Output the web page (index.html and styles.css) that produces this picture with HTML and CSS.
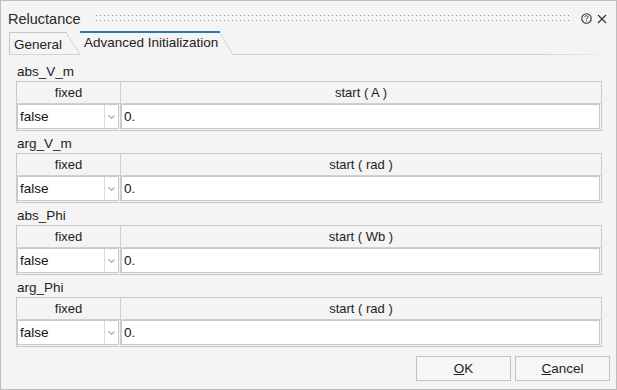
FILE: index.html
```html
<!DOCTYPE html>
<html lang="en">

<head>
    <meta charset="UTF-8">
    <meta name="viewport" content="width=device-width, initial-scale=1.0">
    <title>Reluctance</title>
    <link rel="stylesheet" href="styles.css">
</head>

<body>
    <div class="dialog">
        <div class="titlebar">
            <span class="title">Reluctance</span>
            <span class="grip"></span>
            <svg class="help" width="11" height="11" viewBox="0 0 11 11">
                <circle cx="5.5" cy="5.5" r="4.7" fill="none" stroke="#333" stroke-width="1.1" />
                <path d="M3.9 4.3 C3.9 3.2 4.6 2.7 5.5 2.7 C6.4 2.7 7.1 3.2 7.1 4.1 C7.1 5 5.6 5.2 5.6 6.4" fill="none" stroke="#333" stroke-width="1" />
                <rect x="5.1" y="7.3" width="1" height="1" fill="#333" />
            </svg>
            <svg class="close" width="10" height="10" viewBox="0 0 10 10">
                <path d="M1 1 L9 9 M9 1 L1 9" stroke="#333" stroke-width="1.2" />
            </svg>
        </div>

        <div class="tabs">
            <div class="tab">General</div>
            <div class="tab active">Advanced Initialization</div>
        </div>

        <div class="panel">
            <section class="param">
                <div class="param-name">abs_V_m</div>
                <div class="grid">
                    <div class="grid-head">
                        <div class="head-cell">fixed</div>
                        <div class="head-cell">start ( A )</div>
                    </div>
                    <div class="grid-row">
                        <div class="cell-fixed">
                            <div class="combo">
                                <span class="combo-value">false</span>
                                <span class="combo-arrow"><svg width="7" height="4" viewBox="0 0 7 4"><path d="M0.5 0.5 L3.5 3.3 L6.5 0.5" fill="none" stroke="#a3a3a3" stroke-width="1.1" /></svg></span>
                            </div>
                        </div>
                        <div class="cell-start">
                            <div class="field">0.</div>
                        </div>
                    </div>
                </div>
            </section>

            <section class="param">
                <div class="param-name">arg_V_m</div>
                <div class="grid">
                    <div class="grid-head">
                        <div class="head-cell">fixed</div>
                        <div class="head-cell">start ( rad )</div>
                    </div>
                    <div class="grid-row">
                        <div class="cell-fixed">
                            <div class="combo">
                                <span class="combo-value">false</span>
                                <span class="combo-arrow"><svg width="7" height="4" viewBox="0 0 7 4"><path d="M0.5 0.5 L3.5 3.3 L6.5 0.5" fill="none" stroke="#a3a3a3" stroke-width="1.1" /></svg></span>
                            </div>
                        </div>
                        <div class="cell-start">
                            <div class="field">0.</div>
                        </div>
                    </div>
                </div>
            </section>

            <section class="param">
                <div class="param-name">abs_Phi</div>
                <div class="grid">
                    <div class="grid-head">
                        <div class="head-cell">fixed</div>
                        <div class="head-cell">start ( Wb )</div>
                    </div>
                    <div class="grid-row">
                        <div class="cell-fixed">
                            <div class="combo">
                                <span class="combo-value">false</span>
                                <span class="combo-arrow"><svg width="7" height="4" viewBox="0 0 7 4"><path d="M0.5 0.5 L3.5 3.3 L6.5 0.5" fill="none" stroke="#a3a3a3" stroke-width="1.1" /></svg></span>
                            </div>
                        </div>
                        <div class="cell-start">
                            <div class="field">0.</div>
                        </div>
                    </div>
                </div>
            </section>

            <section class="param">
                <div class="param-name">arg_Phi</div>
                <div class="grid">
                    <div class="grid-head">
                        <div class="head-cell">fixed</div>
                        <div class="head-cell">start ( rad )</div>
                    </div>
                    <div class="grid-row">
                        <div class="cell-fixed">
                            <div class="combo">
                                <span class="combo-value">false</span>
                                <span class="combo-arrow"><svg width="7" height="4" viewBox="0 0 7 4"><path d="M0.5 0.5 L3.5 3.3 L6.5 0.5" fill="none" stroke="#a3a3a3" stroke-width="1.1" /></svg></span>
                            </div>
                        </div>
                        <div class="cell-start">
                            <div class="field">0.</div>
                        </div>
                    </div>
                </div>
            </section>
        </div>

        <div class="buttons">
            <button class="btn"><u>O</u>K</button>
            <button class="btn"><u>C</u>ancel</button>
        </div>
    </div>
</body>

</html>
```

FILE: styles.css
```css
* {
    margin: 0;
    padding: 0;
    box-sizing: border-box;
    font-family: "Liberation Sans", Arial, sans-serif;
}

html,
body {
    width: 617px;
    height: 390px;
    background-color: #f4f4f4;
    overflow: hidden;
}

.dialog {
    display: flex;
    flex-direction: column;
    width: 617px;
    height: 390px;
    border: 1px solid #bdbdbd;
    background-color: #f4f4f4;
    color: #1e1e1e;
}

/* title bar */

.titlebar {
    display: flex;
    align-items: center;
    height: 30px;
    padding: 5px 9px 0 7px;
}

.title {
    font-size: 14.5px;
    color: #2a2a2a;
}

.grip {
    flex: 1;
    height: 7px;
    margin: 0 11px 0 15px;
    background-image: linear-gradient(to right, #8f8f8f 1.5px, transparent 1.5px);
    background-size: 4px 100%;
    -webkit-mask-image: linear-gradient(to bottom, #000 1.5px, transparent 1.5px);
    mask-image: linear-gradient(to bottom, #000 1.5px, transparent 1.5px);
    -webkit-mask-size: 100% 5px;
    mask-size: 100% 5px;
}

.help {
    margin-right: 5px;
}

/* tabs */

.tabs {
    display: flex;
    align-items: flex-end;
    height: 24px;
    margin-left: 8px;
    background-image: linear-gradient(to right, #d3d3d3 88%, rgba(211, 211, 211, 0));
    background-size: 100% 1px;
    background-position: bottom left;
    background-repeat: no-repeat;
}

.tab {
    position: relative;
    display: flex;
    align-items: center;
    width: 57px;
    height: 23px;
    padding-left: 4px;
    border-top: 1px solid #c6c6c6;
    border-left: 1px solid #c6c6c6;
    font-size: 13.5px;
    color: #222;
}

.tab::after {
    content: "";
    position: absolute;
    left: 100%;
    top: -1px;
    width: 14px;
    height: 23px;
    background: linear-gradient(to top right, transparent calc(50% - 0.6px), #c6c6c6 50%, transparent calc(50% + 0.6px));
}

.tab.active {
    width: 140px;
    height: 24px;
    margin-left: 14px;
    padding-bottom: 3px;
    border-left: none;
    border-top: 2px solid #2b7bb0;
    background-color: #f4f4f4;
}

.tab.active::after {
    top: 0;
    width: 13px;
    height: 22px;
    background: linear-gradient(to top right, #f4f4f4 calc(50% - 0.6px), #c6c6c6 50%, transparent calc(50% + 0.6px));
}

/* parameters */

.panel {
    display: flex;
    flex-direction: column;
    gap: 5px;
    padding: 9px 14px 0 15px;
}

.param-name {
    height: 16px;
    margin-bottom: 1px;
    padding-left: 1px;
    font-size: 13.5px;
    line-height: 16px;
}

.grid {
    border: 1px solid #c8c8c8;
}

.grid-head {
    display: grid;
    grid-template-columns: 104px 1fr;
    height: 22px;
    border-bottom: 1px solid #cfcfcf;
}

.head-cell {
    display: flex;
    align-items: center;
    justify-content: center;
    font-size: 13px;
}

.head-cell:first-child {
    border-right: 1px solid #cfcfcf;
}

.grid-row {
    display: grid;
    grid-template-columns: 104px 1fr;
    padding-bottom: 1px;
}

.cell-fixed {
    padding-right: 1px;
    border-right: 1px solid #cfcfcf;
}

.cell-start {
    padding-right: 1px;
}

.combo {
    display: flex;
    height: 25px;
    border: 1px solid #c8c8c8;
    background-color: #fff;
}

.combo-value {
    display: flex;
    align-items: center;
    flex: 1;
    padding-left: 2px;
    border-right: 1px solid #dadada;
    font-size: 13.5px;
    color: #111;
}

.combo-arrow {
    display: flex;
    align-items: center;
    justify-content: center;
    width: 13px;
}

.field {
    display: flex;
    align-items: center;
    height: 25px;
    padding-left: 2px;
    border: 1px solid #c8c8c8;
    background-color: #fff;
    font-size: 13.5px;
    color: #111;
}

/* footer buttons */

.buttons {
    display: flex;
    justify-content: flex-end;
    gap: 4px;
    margin-top: auto;
    padding: 0 6px 8px 0;
}

.btn {
    width: 95px;
    height: 25px;
    border: 1px solid #c2c2c2;
    background-color: #f6f6f6;
    font-size: 13.5px;
    color: #1e1e1e;
}
```
